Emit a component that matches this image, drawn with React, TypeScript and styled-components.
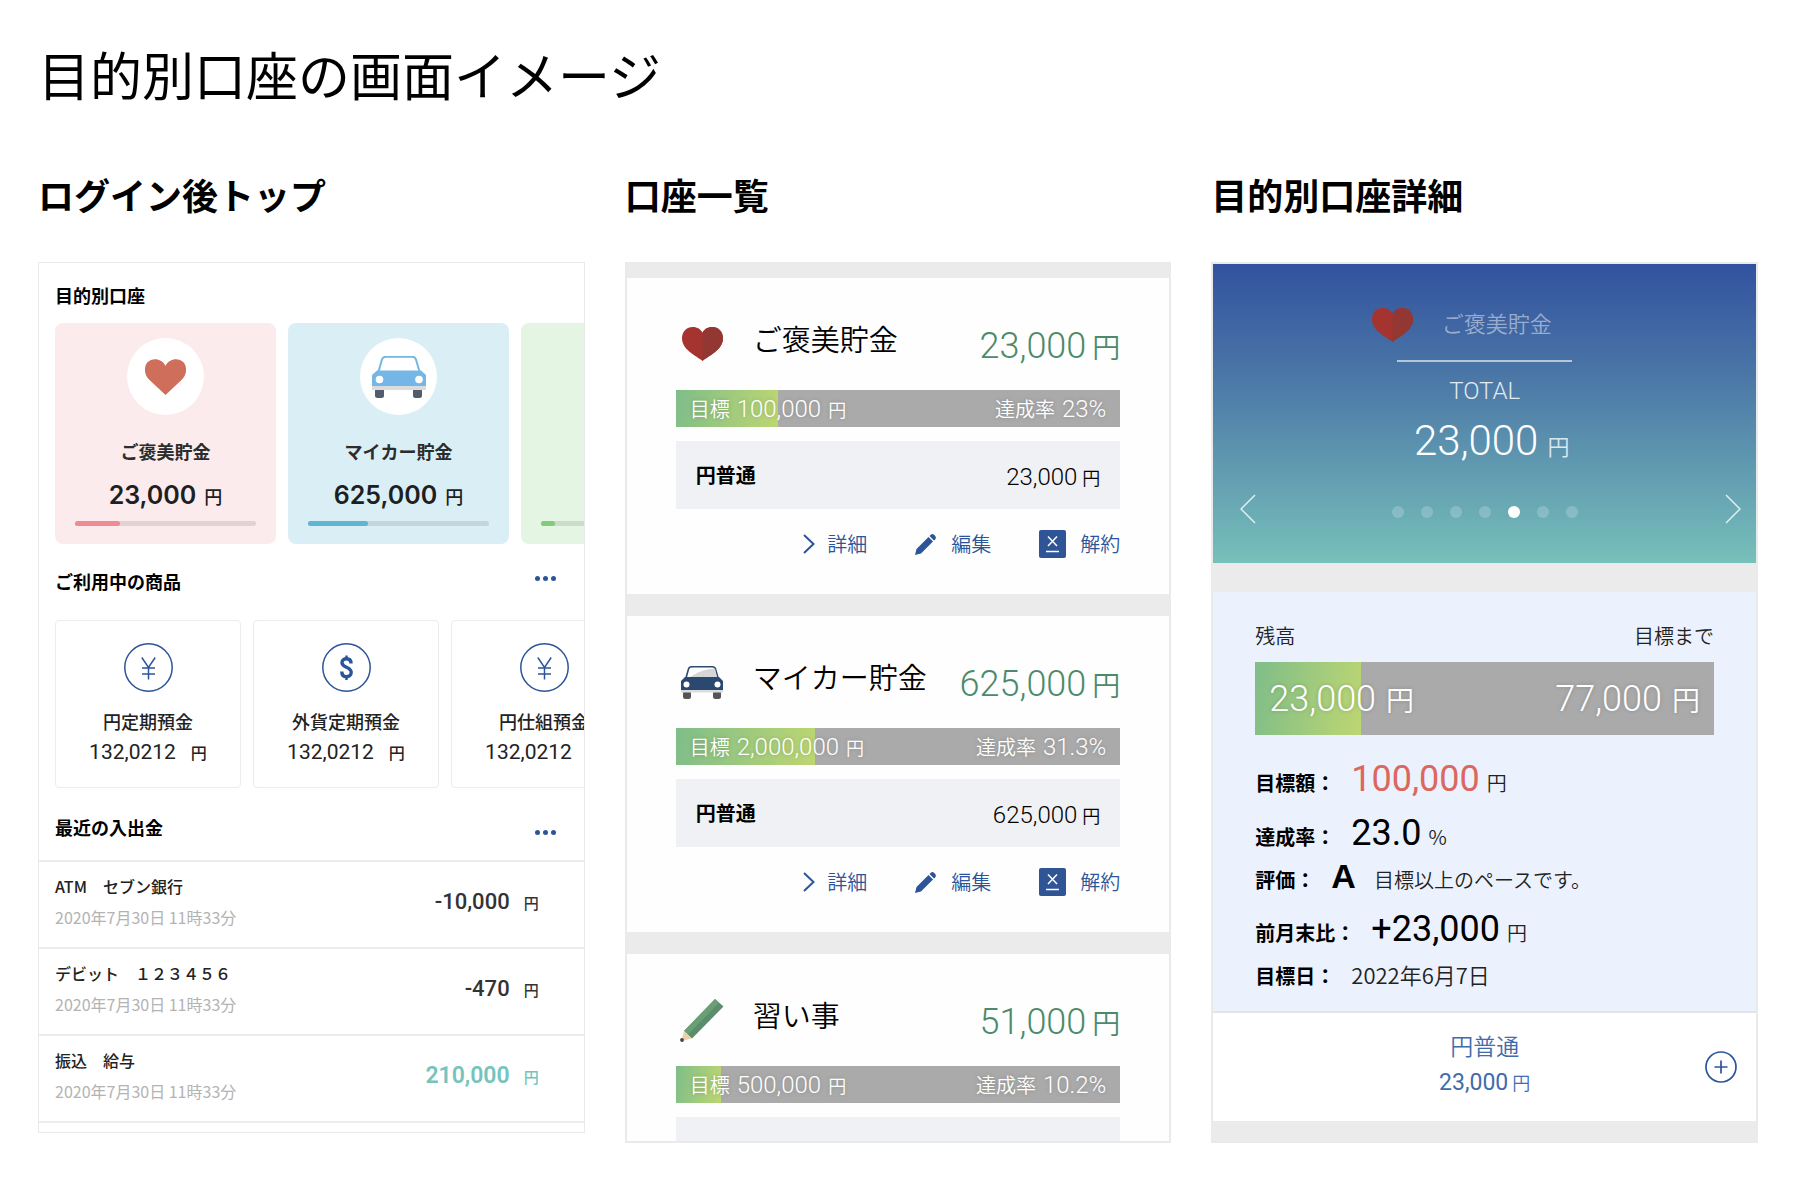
import React from 'react';
import styled, { createGlobalStyle } from 'styled-components';

const jp = '"Noto Sans CJK JP", sans-serif';
const roboto = 'Roboto, "Noto Sans CJK JP", sans-serif';
const inter = 'Inter, "Noto Sans CJK JP", sans-serif';
const blue = '#2c5599';

const Global = createGlobalStyle`
  *, *::before, *::after { box-sizing: border-box; }
  body { margin: 0; background: #fff; color: #000; font-family: ${jp}; }
  h1, h2, h3, p, ul, dl, dd { margin: 0; padding: 0; }
  ul { list-style: none; }
  button { border: 0; padding: 0; background: none; color: inherit; font: inherit; cursor: pointer; }
  a { color: inherit; text-decoration: none; }
  svg { display: block; }
`;

const Page = styled.main`
  padding: 42px 48px 32px 38px;
`;
const PageTitle = styled.h1`
  font-size: 52px;
  line-height: 64px;
  font-weight: 400;
`;
const Columns = styled.div`
  display: grid;
  grid-template-columns: repeat(3, minmax(0, 1fr));
  gap: 40px;
  align-items: start;
  margin-top: 64px;
`;
const ColumnTitle = styled.h2`
  margin-bottom: 44px;
  font-size: 36px;
  line-height: 48px;
  font-weight: 700;
  white-space: nowrap;
`;
const Screen = styled.div<{ $border: number }>`
  max-height: 881px;
  overflow: hidden;
  border: ${(p) => p.$border}px solid #e9eaea;
  background: #fff;
`;

/* ---- Home screen ---- */

const Section = styled.section<{ $top: number }>`
  padding: ${(p) => p.$top}px 0 0 16px;
`;
const SectionHead = styled.div<{ $align?: string; $gap: number }>`
  display: flex;
  justify-content: space-between;
  align-items: ${(p) => p.$align || 'center'};
  height: 28px;
  margin-bottom: ${(p) => p.$gap}px;
  padding-right: 28px;
`;
const SectionTitle = styled.h3`
  font-size: 18px;
  line-height: 28px;
  font-weight: 700;
`;
const MoreButton = styled.button`
  display: flex;
  gap: 3px;
  padding: 9px 0 6px;
  span {
    width: 5px;
    height: 5px;
    border-radius: 50%;
    background: ${blue};
  }
`;
const Strip = styled.ul`
  display: flex;
  gap: 12px;
`;
const GoalCard = styled.li<{ $bg: string }>`
  display: flex;
  flex: 0 0 221px;
  flex-direction: column;
  align-items: center;
  padding: 15px 20px 18px;
  border-radius: 8px;
  background: ${(p) => p.$bg};
  color: #1d2021;
`;
const GoalIcon = styled.div`
  display: grid;
  place-items: center;
  width: 77px;
  height: 77px;
  border-radius: 50%;
  background: #fff;
`;
const GoalName = styled.p`
  margin-top: 22px;
  color: #2a2c2d;
  font-size: 18px;
  line-height: 28px;
  font-weight: 700;
`;
const GoalAmount = styled.p`
  display: flex;
  align-items: baseline;
  gap: 8px;
  height: 32px;
  margin: 14px 0 10px;
  font: 600 25px/32px ${inter};
  span { font: 500 18px/20px ${jp}; }
`;
const Track = styled.div`
  width: 100%;
  height: 5px;
  border-radius: 3px;
  background: rgba(90, 90, 90, 0.16);
`;
const TrackFill = styled.div<{ $color: string }>`
  height: 100%;
  border-radius: 3px;
  background: ${(p) => p.$color};
`;
const ProductCard = styled.li`
  display: flex;
  flex: 0 0 186px;
  flex-direction: column;
  align-items: center;
  padding: 22px 0 21px;
  border: 1px solid #ececec;
  border-radius: 4px;
  color: #222;
`;
const ProductName = styled.p`
  margin: 15px 0 3px;
  font-size: 18px;
  line-height: 28px;
  font-weight: 500;
  white-space: nowrap;
`;
const ProductAmount = styled.p`
  display: flex;
  align-items: baseline;
  gap: 15px;
  height: 28px;
  font: 400 21px/28px ${roboto};
  span { font: 500 16px/18px ${jp}; }
`;
const History = styled.ul`
  padding-bottom: 9px;
`;
const HistoryRow = styled.li`
  display: flex;
  justify-content: space-between;
  align-items: center;
  padding: 12px 45px 18px 16px;
  border-top: 2px solid #ededed;
  &:last-child { border-bottom: 2px solid #ededed; }
`;
const HistoryName = styled.p`
  margin-bottom: 7px;
  color: #222;
  font-size: 16px;
  line-height: 24px;
  font-weight: 500;
`;
const HistoryDate = styled.p`
  color: #b3b3b3;
  font-size: 16px;
  line-height: 24px;
`;
const HistoryAmount = styled.p<{ $income?: boolean }>`
  display: flex;
  align-items: baseline;
  gap: 14px;
  height: 28px;
  color: ${(p) => (p.$income ? '#74c4bd' : '#333')};
  font: ${(p) => (p.$income ? '600 23px' : '500 22px')}/28px ${roboto};
  span { font: 500 15px/18px ${jp}; }
`;

/* ---- Account list screen ---- */

const AccountList = styled.ul`
  display: flex;
  flex-direction: column;
  gap: 22px;
  padding-top: 14px;
  background: #ebebeb;
`;
const Account = styled.li`
  padding: 42px 49px 32px;
  background: #fefefe;
`;
const AccountHead = styled.div`
  display: grid;
  grid-template-columns: 53px 1fr auto;
  column-gap: 24px;
  align-items: center;
  height: 48px;
  margin-bottom: 22px;
`;
const AccountIcon = styled.div`
  display: grid;
  place-items: center;
`;
const AccountName = styled.h3`
  padding-bottom: 12px;
  font-size: 29px;
  line-height: 36px;
  font-weight: 350;
  white-space: nowrap;
`;
const AccountTotal = styled.p`
  display: flex;
  align-items: baseline;
  gap: 6px;
  padding-top: 4px;
  color: #4b8a6a;
  font: 300 36px/44px ${roboto};
  span { font: 350 28px/32px ${jp}; }
`;
const Bar = styled.div<{ $height: number }>`
  display: grid;
  height: ${(p) => p.$height}px;
  background: #aaa;
`;
const BarFill = styled.div`
  grid-area: 1 / 1;
  background: linear-gradient(100deg, #7fbd89, #bdd672);
`;
const BarText = styled.div`
  display: flex;
  grid-area: 1 / 1;
  justify-content: space-between;
  align-items: center;
  padding: 0 14px;
  color: #fff;
  white-space: nowrap;
  text-shadow: 0 0 4px rgba(0, 0, 0, 0.2);
`;
const Line = styled.p<{ $gap: number }>`
  display: flex;
  align-items: baseline;
  gap: ${(p) => p.$gap}px;
`;
const Txt = styled.span<{ $size: number }>`
  font-size: ${(p) => p.$size}px;
  line-height: 28px;
  font-weight: 350;
`;
const Num = styled.span`
  font: 300 24px/28px ${roboto};
`;
const SubAccount = styled.div`
  display: flex;
  justify-content: space-between;
  align-items: center;
  height: 68px;
  margin: 14px 0 17px;
  padding: 0 20px;
  background: #eff1f4;
  b { font-size: 20px; line-height: 28px; font-weight: 700; }
  p { padding-top: 3px; }
`;
const Actions = styled.div`
  display: flex;
  justify-content: flex-end;
  gap: 48px;
  height: 36px;
`;
const Action = styled.a`
  display: flex;
  align-items: center;
  gap: 12px;
  color: ${blue};
  font-size: 20px;
  line-height: 36px;
  font-weight: 350;
`;

/* ---- Goal detail screen ---- */

const Hero = styled.section`
  display: flex;
  flex-direction: column;
  align-items: center;
  height: 299px;
  padding-top: 41px;
  background: linear-gradient(#32529f, #4974a6 35%, #609ab0 68%, #77c0ba);
  color: #fff;
`;
const HeroName = styled.div`
  display: flex;
  align-items: center;
  gap: 29px;
  height: 40px;
  padding-right: 46px;
  color: rgba(255, 255, 255, 0.48);
  font-size: 22px;
  line-height: 32px;
  font-weight: 350;
  span { padding-bottom: 6px; }
`;
const HeroRule = styled.div`
  width: 175px;
  height: 2px;
  margin: 15px 0 13px;
  background: rgba(255, 255, 255, 0.6);
`;
const HeroLabel = styled.p`
  color: rgba(255, 255, 255, 0.85);
  font: 300 24px/32px ${roboto};
`;
const HeroTotal = styled.p`
  display: flex;
  align-items: baseline;
  gap: 9px;
  height: 68px;
  padding-left: 14px;
  font: 300 42px/68px ${roboto};
  span { color: rgba(255, 255, 255, 0.8); font: 350 22px/24px ${jp}; }
`;
const Pager = styled.div`
  display: grid;
  grid-template-columns: 1fr auto 1fr;
  align-items: center;
  width: 100%;
  margin-top: 19px;
  padding: 0 15px;
  > button:first-child { justify-self: start; padding-left: 12px; }
  > button:last-child { justify-self: end; }
`;
const Dots = styled.div`
  display: flex;
  gap: 17px;
  padding-top: 6px;
`;
const Dot = styled.button<{ $on: boolean }>`
  width: 12px;
  height: 12px;
  border-radius: 50%;
  background: ${(p) => (p.$on ? '#fff' : 'rgba(255, 255, 255, 0.2)')};
`;
const Band = styled.div<{ $height: number }>`
  height: ${(p) => p.$height}px;
  background: #ebebeb;
`;
const Info = styled.section`
  padding: 30px 42px 13px;
  border-bottom: 2px solid #e2e4e6;
  background: #ebf2fd;
`;
const InfoLabels = styled.div`
  display: flex;
  justify-content: space-between;
  margin-bottom: 12px;
  color: #222;
  font-size: 20px;
  line-height: 28px;
  font-weight: 350;
`;
const BarAmount = styled.p`
  display: flex;
  align-items: baseline;
  gap: 10px;
  font: 300 36px/56px ${roboto};
  span { font: 350 28px/32px ${jp}; }
`;
const Facts = styled.dl`
  margin-top: 17px;
`;
const Fact = styled.div<{ $tall?: boolean }>`
  display: flex;
  align-items: baseline;
  height: ${(p) => (p.$tall ? 54 : 42)}px;
  white-space: nowrap;
  dt { font-size: 20px; line-height: 28px; font-weight: 700; }
  dd { display: flex; align-items: baseline; margin-left: 16px; }
`;
const FactNumber = styled.span<{ $color?: string }>`
  color: ${(p) => p.$color || '#000'};
  font: 400 36px/54px ${roboto};
`;
const FactUnit = styled.span`
  margin-left: 7px;
  color: #222;
  font-size: 20px;
  line-height: 24px;
  font-weight: 350;
`;
const FactGrade = styled.span`
  margin-right: 18px;
  font: 700 34px/32px "Liberation Sans", sans-serif;
`;
const FactText = styled.span<{ $size: number; $line: number }>`
  color: #222;
  font-size: ${(p) => p.$size}px;
  line-height: ${(p) => p.$line}px;
  font-weight: 350;
`;
const Deposit = styled.section`
  display: grid;
  grid-template-columns: 1fr auto 1fr;
  align-items: center;
  height: 108px;
  padding: 0 19px;
  background: #fff;
  color: #3f6cab;
  text-align: center;
  > button { justify-self: end; }
`;
const DepositName = styled.p`
  font-size: 23px;
  line-height: 28px;
  font-weight: 350;
`;
const DepositAmount = styled.p`
  display: flex;
  justify-content: center;
  align-items: baseline;
  gap: 4px;
  height: 44px;
  font: 400 23px/48px ${roboto};
  span { font: 350 18px/20px ${jp}; }
`;

/* ---- Drawings ---- */

const heartPath = 'M20 36 C13 30 0 24 0 12 C0 5 4.500 0 10.500 0 C15 0 18.500 2.500 20 6 C21.500 2.500 25 0 29.500 0 C35.500 0 40 5 40 12 C40 24 27 30 20 36Z';

const FlatHeart = () => (
  <svg width="41" height="36" viewBox="0 0 41 36" aria-hidden="true">
    <path fill="#cf6e5a" d="M20.500 36 L4 20.500 C-1.500 15 -.800 7 2.500 3.300 C7.500 -1.500 17 -.500 20.500 7 C24 -.500 33.500 -1.500 38.500 3.300 C41.800 7 42.500 15 37 20.500Z" />
  </svg>
);

const Heart = () => (
  <svg width="41" height="34" viewBox="0 0 40 36" preserveAspectRatio="none" aria-hidden="true">
    <path fill="#a5332f" d={heartPath} />
    <path fill="#933733" d="M20 36 V6 C21.500 2.500 25 0 29.500 0 C35.500 0 40 5 40 12 C40 24 27 30 20 36Z" />
  </svg>
);

const BlueCar = () => (
  <svg width="54" height="42" viewBox="0 0 54 42" aria-hidden="true">
    <rect x="3" y="32" width="9" height="10" rx="2.500" fill="#525d6b" />
    <rect x="41" y="32" width="9" height="10" rx="2.500" fill="#525d6b" />
    <path d="M6.500 15.500 L10 3.500 Q11 .8 14 .8 H40 Q43 .8 44 3.500 L47.500 15.500" fill="#fff" stroke="#74b6e5" strokeWidth="2" />
    <path d="M5 14.500 H49 L54 19 V31 H0 V19Z" fill="#74b6e5" />
    <rect y="30" width="54" height="4" fill="#d9dbdc" />
    <circle cx="7.500" cy="23.500" r="3.800" fill="#fff" />
    <circle cx="47" cy="23.500" r="3.800" fill="#fff" />
  </svg>
);

const NavyCar = () => (
  <svg width="42" height="33" viewBox="0 0 42 33" aria-hidden="true">
    <rect x="2" y="25" width="8" height="8" rx="2.500" fill="#555" />
    <rect x="32" y="25" width="8" height="8" rx="2.500" fill="#555" />
    <path d="M5 12 L7.500 3 Q8.200 .8 10.500 .8 H31.500 Q33.800 .8 34.500 3 L37 12Z" fill="#fff" stroke="#2f4a70" strokeWidth="1.600" />
    <path d="M9 11 Q20 3 34 2.500 L36 11Z" fill="#d5d6d8" />
    <path d="M4 11 H38 L42 15 V24 H0 V15Z" fill="#2b4870" />
    <rect x="0" y="24" width="42" height="2.500" fill="#dcdcdc" />
    <circle cx="5.500" cy="18.500" r="3" fill="#fff" />
    <circle cx="36.500" cy="18.500" r="3" fill="#fff" />
  </svg>
);

const GreenPencil = () => (
  <svg width="44" height="43" viewBox="0 0 44 43" aria-hidden="true">
    <path d="M35 0 L43.500 7.500 L12 39.500 L4 32Z" fill="#5b8d6c" />
    <path d="M35 0 L39 3.700 L8 35.500 L4 32Z" fill="#6a9f76" />
    <path d="M4 32 L12 39.500 L1.500 42Z" fill="#ecd0ab" />
    <circle cx="2" cy="41" r="1.900" fill="#444" />
  </svg>
);

const YenIcon = () => (
  <svg width="49" height="49" viewBox="0 0 49 49" fill="none" stroke={blue} strokeWidth="1.500" aria-hidden="true">
    <circle cx="24.500" cy="24.500" r="23.700" />
    <path d="M17.800 14.500 L24.500 24.500 L31.200 14.500 M24.500 24.500 V36.500 M18 25 H31 M18 31 H31" />
  </svg>
);

const DollarIcon = () => (
  <svg width="49" height="49" viewBox="0 0 49 49" fill="none" stroke={blue} aria-hidden="true">
    <circle cx="24.500" cy="24.500" r="23.700" strokeWidth="1.500" />
    <path strokeWidth="3.400" d="M29 20.500 C29 17 27 15.800 24.500 15.800 C22 15.800 20 17.200 20 19.800 C20 25 29.200 23.500 29.200 29.300 C29.200 32 27.200 33.700 24.500 33.700 C21.800 33.700 19.800 32 19.800 28.500" />
    <path strokeWidth="2.400" d="M24.500 12.500 V16 M24.500 33 V37" />
  </svg>
);

const Chevron = () => (
  <svg width="12" height="20" viewBox="0 0 12 20" fill="none" stroke={blue} strokeWidth="2" aria-hidden="true">
    <path d="M1 1 L10.500 10 L1 19" />
  </svg>
);

const EditIcon = () => (
  <svg width="24" height="21" viewBox="0 0 24 21" fill={blue} aria-hidden="true">
    <path d="M0 21 L1.500 15 L13.500 3 L18 7.500 L6 19.500Z" />
    <path d="M14.500 2 L15.800 .7 Q17.500 -.6 19.300 1 L20 1.700 Q21.600 3.500 20.300 5.200 L19 6.500Z" />
  </svg>
);

const CancelIcon = () => (
  <svg width="29" height="28" viewBox="0 0 29 28" aria-hidden="true">
    <rect width="27" height="28" rx="2" fill="#2f5597" />
    <path d="M9 6.500 L18 16 M18 6.500 L9 16 M7 21.500 H20" fill="none" stroke="#fff" strokeWidth="1.500" />
  </svg>
);

const Arrow = ({ d }: { d: string }) => (
  <svg width="16" height="30" viewBox="0 0 16 30" fill="none" stroke="#fff" strokeOpacity=".8" strokeWidth="1.500" aria-hidden="true">
    <path d={d} />
  </svg>
);

const PlusIcon = () => (
  <svg width="32" height="32" viewBox="0 0 32 32" fill="none" stroke={blue} strokeWidth="1.700" aria-hidden="true">
    <circle cx="16" cy="16" r="15" />
    <path d="M9.500 16 H22.500 M16 9.500 V22.500" />
  </svg>
);

/* ---- Data ---- */

const goals = [
  { name: 'ご褒美貯金', amount: '23,000', bg: '#fbebec', color: '#ee8c93', rate: 25, icon: <FlatHeart /> },
  { name: 'マイカー貯金', amount: '625,000', bg: '#d9eff5', color: '#5fb5d2', rate: 33, icon: <BlueCar /> },
  { name: '習い事', amount: '5,000', bg: '#e4f5e4', color: '#80cc7c', rate: 8, icon: null },
];

const products = [
  { name: '円定期預金', amount: '132,0212', icon: <YenIcon /> },
  { name: '外貨定期預金', amount: '132,0212', icon: <DollarIcon /> },
  { name: '円仕組預金', amount: '132,0212', icon: <YenIcon /> },
];

const history = [
  { name: 'ATM　セブン銀行', amount: '-10,000' },
  { name: 'デビット　１２３４５６', amount: '-470' },
  { name: '振込　給与', amount: '210,000', income: true },
];

const accounts = [
  { name: 'ご褒美貯金', total: '23,000', target: '100,000', rate: '23', icon: <Heart /> },
  { name: 'マイカー貯金', total: '625,000', target: '2,000,000', rate: '31.3', icon: <NavyCar /> },
  { name: '習い事', total: '51,000', target: '500,000', rate: '10.2', icon: <GreenPencil /> },
];

const More = () => (
  <MoreButton aria-label="もっと見る">
    <span />
    <span />
    <span />
  </MoreButton>
);

const HomeScreen = () => (
  <Screen $border={1}>
    <Section $top={18}>
      <SectionHead $gap={14}>
        <SectionTitle>目的別口座</SectionTitle>
      </SectionHead>
      <Strip>
        {goals.map((g) => (
          <GoalCard key={g.name} $bg={g.bg}>
            <GoalIcon>{g.icon}</GoalIcon>
            <GoalName>{g.name}</GoalName>
            <GoalAmount>
              {g.amount}
              <span>円</span>
            </GoalAmount>
            <Track>
              <TrackFill $color={g.color} style={{ width: `${g.rate}%` }} />
            </Track>
          </GoalCard>
        ))}
      </Strip>
    </Section>
    <Section $top={23}>
      <SectionHead $align="flex-start" $gap={25}>
        <SectionTitle>ご利用中の商品</SectionTitle>
        <More />
      </SectionHead>
      <Strip>
        {products.map((p) => (
          <ProductCard key={p.name}>
            {p.icon}
            <ProductName>{p.name}</ProductName>
            <ProductAmount>
              {p.amount}
              <span>円</span>
            </ProductAmount>
          </ProductCard>
        ))}
      </Strip>
    </Section>
    <Section $top={25}>
      <SectionHead $align="flex-end" $gap={19}>
        <SectionTitle>最近の入出金</SectionTitle>
        <More />
      </SectionHead>
    </Section>
    <History>
      {history.map((h) => (
        <HistoryRow key={h.name}>
          <div>
            <HistoryName>{h.name}</HistoryName>
            <HistoryDate>2020年7月30日 11時33分</HistoryDate>
          </div>
          <HistoryAmount $income={h.income}>
            {h.amount}
            <span>円</span>
          </HistoryAmount>
        </HistoryRow>
      ))}
    </History>
  </Screen>
);

const AccountsScreen = () => (
  <Screen $border={2}>
    <AccountList>
      {accounts.map((a) => (
        <Account key={a.name}>
          <AccountHead>
            <AccountIcon>{a.icon}</AccountIcon>
            <AccountName>{a.name}</AccountName>
            <AccountTotal>
              {a.total}
              <span>円</span>
            </AccountTotal>
          </AccountHead>
          <Bar $height={37}>
            <BarFill style={{ width: `${a.rate}%` }} />
            <BarText>
              <Line $gap={7}>
                <Txt $size={20}>目標</Txt>
                <Num>{a.target}</Num>
                <Txt $size={18}>円</Txt>
              </Line>
              <Line $gap={7}>
                <Txt $size={20}>達成率</Txt>
                <Num>{a.rate}%</Num>
              </Line>
            </BarText>
          </Bar>
          <SubAccount>
            <b>円普通</b>
            <Line $gap={5}>
              <Num>{a.total}</Num>
              <Txt $size={18}>円</Txt>
            </Line>
          </SubAccount>
          <Actions>
            <Action href="#detail">
              <Chevron />
              詳細
            </Action>
            <Action href="#edit">
              <EditIcon />
              編集
            </Action>
            <Action href="#cancel">
              <CancelIcon />
              解約
            </Action>
          </Actions>
        </Account>
      ))}
    </AccountList>
  </Screen>
);

const DetailScreen = () => (
  <Screen $border={2}>
    <Hero>
      <HeroName>
        <Heart />
        <span>ご褒美貯金</span>
      </HeroName>
      <HeroRule />
      <HeroLabel>TOTAL</HeroLabel>
      <HeroTotal>
        23,000
        <span>円</span>
      </HeroTotal>
      <Pager>
        <button aria-label="前の口座">
          <Arrow d="M15 1 L1 15 L15 29" />
        </button>
        <Dots>
          {[0, 1, 2, 3, 4, 5, 6].map((i) => (
            <Dot key={i} $on={i === 4} aria-label={`口座 ${i + 1}`} />
          ))}
        </Dots>
        <button aria-label="次の口座">
          <Arrow d="M1 1 L15 15 L1 29" />
        </button>
      </Pager>
    </Hero>
    <Band $height={29} />
    <Info>
      <InfoLabels>
        <span>残高</span>
        <span>目標まで</span>
      </InfoLabels>
      <Bar $height={73}>
        <BarFill style={{ width: '23%' }} />
        <BarText>
          <BarAmount>
            23,000
            <span>円</span>
          </BarAmount>
          <BarAmount>
            77,000
            <span>円</span>
          </BarAmount>
        </BarText>
      </Bar>
      <Facts>
        <Fact $tall>
          <dt>目標額：</dt>
          <dd>
            <FactNumber $color="#dc675e">100,000</FactNumber>
            <FactUnit>円</FactUnit>
          </dd>
        </Fact>
        <Fact $tall>
          <dt>達成率：</dt>
          <dd>
            <FactNumber>23.0</FactNumber>
            <FactUnit>%</FactUnit>
          </dd>
        </Fact>
        <Fact>
          <dt>評価：</dt>
          <dd>
            <FactGrade>A</FactGrade>
            <FactText $size={20} $line={28}>目標以上のペースです。</FactText>
          </dd>
        </Fact>
        <Fact $tall>
          <dt>前月末比：</dt>
          <dd>
            <FactNumber>+23,000</FactNumber>
            <FactUnit>円</FactUnit>
          </dd>
        </Fact>
        <Fact>
          <dt>目標日：</dt>
          <dd>
            <FactText $size={22} $line={36}>2022年6月7日</FactText>
          </dd>
        </Fact>
      </Facts>
    </Info>
    <Deposit>
      <span />
      <div>
        <DepositName>円普通</DepositName>
        <DepositAmount>
          23,000
          <span>円</span>
        </DepositAmount>
      </div>
      <button aria-label="追加">
        <PlusIcon />
      </button>
    </Deposit>
    <Band $height={20} />
  </Screen>
);

export default function App() {
  return (
    <>
      <Global />
      <Page>
        <PageTitle>目的別口座の画面イメージ</PageTitle>
        <Columns>
          <section>
            <ColumnTitle>ログイン後トップ</ColumnTitle>
            <HomeScreen />
          </section>
          <section>
            <ColumnTitle>口座一覧</ColumnTitle>
            <AccountsScreen />
          </section>
          <section>
            <ColumnTitle>目的別口座詳細</ColumnTitle>
            <DetailScreen />
          </section>
        </Columns>
      </Page>
    </>
  );
}
